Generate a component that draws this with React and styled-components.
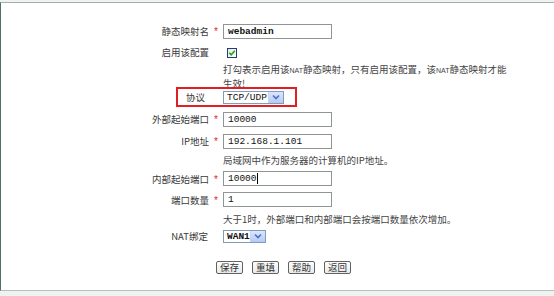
import React from 'react';
import styled, { createGlobalStyle } from 'styled-components';

const GlobalStyle = createGlobalStyle`
  html, body {
    margin: 0;
    padding: 0;
    background: #e4ece9;
  }
  body {
    font-family: "Noto Sans CJK SC", "Liberation Sans", sans-serif;
  }
`;

const Page = styled.div`
  width: 554px;
  height: 296px;
  padding-top: 2px;
  box-sizing: border-box;
  background: #eef2f0;
`;

const Panel = styled.div`
  height: 289px;
  box-sizing: border-box;
  background: #fff;
  border-top: 1px solid #a4aeaa;
  border-left: 1px solid #52706a;
  border-bottom: 1px solid #b8c0bd;
  padding-top: 17px;
  display: flex;
  flex-direction: column;
`;

const Row = styled.div`
  position: relative;
  display: grid;
  grid-template-columns: 208px 14px 1fr;
  align-items: center;
  height: ${(p) => p.h || 22}px;
`;

const Label = styled.div`
  text-align: right;
  font-size: 9.5px;
  color: #3a3a3a;
  white-space: nowrap;
  padding-right: ${(p) => p.pr || 0}px;
`;

const Star = styled.div`
  color: #e0262b;
  font-size: 10px;
  font-family: "Liberation Sans", sans-serif;
  text-align: center;
  line-height: 1;
  padding-top: 2px;
`;

const Field = styled.div`
  display: flex;
  align-items: center;
`;

const TextBox = styled.div`
  width: 109px;
  height: 15px;
  box-sizing: border-box;
  border: 1px solid #8f9593;
  background: #fff;
  font-family: "Liberation Mono", monospace;
  font-size: 9.5px;
  font-weight: ${(p) => (p.bold ? 700 : 400)};
  color: #111;
  padding-left: 4px;
  line-height: 13px;
  display: flex;
  align-items: center;
`;

const Caret = styled.span`
  display: inline-block;
  width: 1px;
  height: 11px;
  background: #000;
`;

const Help = styled.div`
  grid-column: 3;
  font-size: 9.5px;
  line-height: 12px;
  color: #444;
  white-space: nowrap;
  padding-top: ${(p) => p.pt || 0}px;
`;

const Small = styled.span`
  font-family: "Liberation Sans", sans-serif;
  font-size: 7px;
`;

const Select = styled.div`
  width: ${(p) => p.w}px;
  height: 13px;
  box-sizing: border-box;
  border: 1px solid #7f9db9;
  background: #fff;
  display: flex;
  align-items: stretch;
`;

const SelectText = styled.div`
  flex: 1;
  font-family: "Liberation Mono", monospace;
  font-size: 9.5px;
  font-weight: ${(p) => (p.bold ? 700 : 400)};
  color: #111;
  padding-left: 3px;
  line-height: 11px;
`;

const Arrow = styled.div`
  width: 14px;
  background: linear-gradient(#dbe6fd, #b6c9f6);
  border-left: 1px solid #c6d4f3;
  display: flex;
  align-items: center;
  justify-content: center;
`;

const RedBox = styled.div`
  position: absolute;
  left: 175px;
  top: 1px;
  width: 121px;
  height: 20px;
  box-sizing: border-box;
  border: 2px solid #e01e24;
  pointer-events: none;
`;

const Check = styled.div`
  width: 10px;
  height: 10px;
  margin-left: 4px;
  margin-top: 1px;
  box-sizing: border-box;
  border: 1px solid #1f3f6e;
  background: linear-gradient(135deg, #e6e6e0, #fff);
  display: flex;
  align-items: center;
  justify-content: center;
`;

const Buttons = styled.div`
  display: flex;
  gap: 9px;
  padding-left: 215px;
  margin-top: 17px;
`;

const Button = styled.div`
  width: 27px;
  height: 13px;
  box-sizing: border-box;
  border: 1px solid #5d6461;
  border-radius: 2px;
  background: linear-gradient(#fdfdfd, #e9ebea);
  font-size: 9.5px;
  color: #333;
  display: flex;
  align-items: center;
  justify-content: center;
  line-height: 1;
`;

const Chevron = () => (
  <svg width="8" height="6" viewBox="0 0 8 6">
    <path d="M1 1.5 L4 4.5 L7 1.5" fill="none" stroke="#4d6fc4" strokeWidth="1.6" />
  </svg>
);

const Tick = () => (
  <svg width="8" height="8" viewBox="0 0 8 8">
    <path d="M1.3 3.8 L3.2 5.8 L6.8 1.8" fill="none" stroke="#21a121" strokeWidth="1.6" />
  </svg>
);

function InputRow({ label, value, bold, caret, h }) {
  return (
    <Row h={h}>
      <Label>{label}</Label>
      <Star>*</Star>
      <Field>
        <TextBox bold={bold}>
          {value}
          {caret && <Caret />}
        </TextBox>
      </Field>
    </Row>
  );
}

export default function App() {
  return (
    <>
      <GlobalStyle />
      <Page>
        <Panel>
          <InputRow label="静态映射名" value="webadmin" bold h={22} />
          <Row h={20}>
            <Label>启用该配置</Label>
            <div />
            <Field>
              <Check>
                <Tick />
              </Check>
            </Field>
          </Row>
          <Row h={24}>
            <Help pt={1}>
              打勾表示启用该<Small>NAT</Small>静态映射，只有启用该配置，该<Small>NAT</Small>静态映射才能
              <br />
              生效!
            </Help>
          </Row>
          <Row h={22}>
            <Label pr={4}>协议</Label>
            <div />
            <Field>
              <Select w={61}>
                <SelectText>TCP/UDP</SelectText>
                <Arrow>
                  <Chevron />
                </Arrow>
              </Select>
            </Field>
            <RedBox />
          </Row>
          <InputRow label="外部起始端口" value="10000" h={22} />
          <InputRow label="IP地址" value="192.168.1.101" h={22} />
          <Row h={16}>
            <Help>局域网中作为服务器的计算机的IP地址。</Help>
          </Row>
          <InputRow label="内部起始端口" value="10000" caret h={21} />
          <InputRow label="端口数量" value="1" h={21} />
          <Row h={18}>
            <Help>大于1时，外部端口和内部端口会按端口数量依次增加。</Help>
          </Row>
          <Row h={16}>
            <Label pr={1}>NAT绑定</Label>
            <div />
            <Field>
              <Select w={43}>
                <SelectText bold>WAN1</SelectText>
                <Arrow>
                  <Chevron />
                </Arrow>
              </Select>
            </Field>
          </Row>
          <Buttons>
            <Button>保存</Button>
            <Button>重填</Button>
            <Button>帮助</Button>
            <Button>返回</Button>
          </Buttons>
        </Panel>
      </Page>
    </>
  );
}
